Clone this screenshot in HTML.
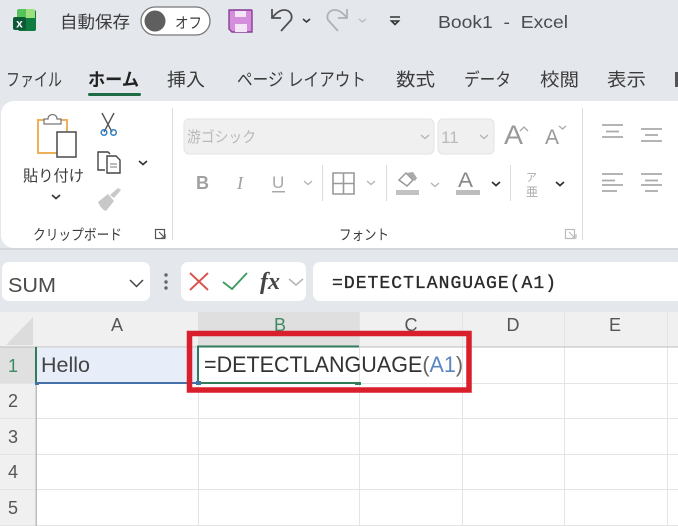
<!DOCTYPE html>
<html><head><meta charset="utf-8"><style>
html,body{margin:0;padding:0;background:#e4e7ec;width:678px;height:526px;overflow:hidden}
svg{display:block}
text{font-family:"Liberation Sans","Noto Sans CJK JP",sans-serif;fill:#3c3c3c}
</style></head><body>
<svg width="678" height="526" viewBox="0 0 678 526" xmlns="http://www.w3.org/2000/svg">
<rect width="678" height="526" fill="#e4e7ec"/>
<!-- excel icon -->
<path d="M18 10h16a2 2 0 0 1 2 2v17a2 2 0 0 1-2 2H20a2 2 0 0 1-2-2z" fill="#117a3d"/>
<path d="M17 11a2 2 0 0 1 2-2h7v9h-9z" fill="#55c25a"/><path d="M26 9h7a2 2 0 0 1 2 2v7H26z" fill="#9be07c"/>
<path d="M26 18h9v13H26z" fill="#107c41"/>
<rect x="13" y="17" width="13" height="13" rx="2" fill="#0c5a35"/>
<text x="19.500" y="27.500" font-size="12" font-weight="bold" text-anchor="middle" style="fill:#fff">x</text>
<!-- title bar -->
<text x="60" y="28" font-size="17" textLength="70" lengthAdjust="spacingAndGlyphs">自動保存</text>
<rect x="141" y="7" width="69" height="28" rx="14" fill="#fff" stroke="#777" stroke-width="1.300"/>
<circle cx="155" cy="21" r="10.500" fill="#5f5f5f"/>
<text x="175" y="28" font-size="15" textLength="27" lengthAdjust="spacingAndGlyphs">オフ</text>
<path d="M229 10h22a1 1 0 0 1 1 1v21h-20l-3-3z" fill="#d58edb" stroke="#8a3c98" stroke-width="1.400"/>
<rect x="235" y="11" width="11" height="6" fill="#f4e4f6"/>
<rect x="235" y="24" width="12" height="8" fill="#f4e4f6"/>
<path d="M272 9v9h9M272 18c4-5 8-8 12-8 6 0 9 5 7 10l-10 11" fill="none" stroke="#505050" stroke-width="1.800"/>
<path d="M303 19l3.500 3 3.500-3" fill="none" stroke="#333" stroke-width="1.500"/>
<path d="M347 9v9h-9M347 18c-4-5-8-8-12-8-6 0-9 5-7 10l10 11" fill="none" stroke="#aeb2b6" stroke-width="1.800"/>
<path d="M359 19l3.500 3 3.500-3" fill="none" stroke="#b8bbbf" stroke-width="1.300"/>
<path d="M390 17h10M391.500 21l3.500 3.500 3.500-3.500z" fill="none" stroke="#333" stroke-width="1.600"/>
<text x="438" y="28" font-size="17.500" textLength="130" lengthAdjust="spacingAndGlyphs" xml:space="preserve" style="fill:#4a4d50">Book1  -  Excel</text>
<!-- tabs -->
<g font-size="18">
<text x="6" y="86" textLength="56" lengthAdjust="spacingAndGlyphs">ファイル</text>
<text x="88" y="86" textLength="51" lengthAdjust="spacingAndGlyphs" font-weight="bold" style="fill:#222">ホーム</text>
<text x="167" y="86" textLength="38" lengthAdjust="spacingAndGlyphs">挿入</text>
<text x="237" y="86" textLength="129" lengthAdjust="spacingAndGlyphs">ページ レイアウト</text>
<text x="396" y="86" textLength="39" lengthAdjust="spacingAndGlyphs">数式</text>
<text x="464" y="86" textLength="47" lengthAdjust="spacingAndGlyphs">データ</text>
<text x="540" y="86" textLength="39" lengthAdjust="spacingAndGlyphs">校閲</text>
<text x="607" y="86" textLength="39" lengthAdjust="spacingAndGlyphs">表示</text>
<rect x="675" y="72" width="3" height="15" fill="#555"/>
</g>
<rect x="88" y="93" width="53" height="3" rx="1.500" fill="#1e6b45"/>
<!-- ribbon -->
<path d="M14 101H678V248H14a13 13 0 0 1-13-13V114a13 13 0 0 1 13-13z" fill="#fff"/>
<rect x="0" y="248" width="678" height="2" fill="#d4d6d9"/>
<rect x="172" y="108" width="1" height="132" fill="#dcdcdc"/>
<rect x="582" y="108" width="1" height="132" fill="#dcdcdc"/>
<!-- clipboard -->
<path d="M44 120H38V153H67V120H61" fill="#fff" stroke="#eeb05a" stroke-width="2"/>
<path d="M44 124V119h4c0-6 9-6 9 0h4v5z" fill="#fff" stroke="#777" stroke-width="1.200"/>
<rect x="57" y="132" width="19" height="25" fill="#fff" stroke="#555" stroke-width="1.600"/>
<text x="23" y="181" font-size="15.500" textLength="61" lengthAdjust="spacingAndGlyphs">貼り付け</text>
<path d="M52 195l4 3.500 4-3.500" fill="none" stroke="#333" stroke-width="1.600"/>
<path d="M102 113l10 19M114 113l-10 19" stroke="#555" stroke-width="1.400" fill="none"/>
<circle cx="104" cy="132.500" r="2.800" fill="none" stroke="#2f7fc4" stroke-width="1.500"/>
<circle cx="113.500" cy="132.500" r="2.800" fill="none" stroke="#2f7fc4" stroke-width="1.500"/>
<path d="M105 170h-7v-18h10l2 2" fill="none" stroke="#444" stroke-width="1.400"/>
<path d="M107 156h9l4 4v13h-13z" fill="#fff" stroke="#444" stroke-width="1.400"/>
<path d="M110 164h7M110 167h7" stroke="#777" stroke-width="1"/>
<path d="M139 161l4 3.500 4-3.500" fill="none" stroke="#333" stroke-width="1.600"/>
<path d="M98 202l10-8 6 7-8 10c-3-1-6-4-8-9z" fill="#c8c8c8"/><path d="M110 195l8-7 3 2-7 8z" fill="#c8c8c8"/>
<text x="33" y="240" font-size="14.500" textLength="89" lengthAdjust="spacingAndGlyphs">クリップボード</text>
<rect x="155.500" y="229.500" width="9" height="9" fill="none" stroke="#555" stroke-width="1.200"/>
<path d="M159 232l6 6M165 234v4h-4" fill="none" stroke="#555" stroke-width="1.200"/>
<!-- font -->
<rect x="184" y="119" width="250" height="35" rx="5" fill="#f0f0f0" stroke="#e3e3e3"/>
<text x="187" y="142" font-size="15" textLength="69" lengthAdjust="spacingAndGlyphs" style="fill:#b9b9b9">游ゴシック</text>
<path d="M421 135l4 3.500 4-3.500" fill="none" stroke="#b5b5b5" stroke-width="1.400"/>
<rect x="438" y="119" width="56" height="35" rx="5" fill="#f0f0f0" stroke="#e3e3e3"/>
<text x="441" y="143" font-size="17" style="fill:#b9b9b9">11</text>
<path d="M480 135l4 3.500 4-3.500" fill="none" stroke="#b5b5b5" stroke-width="1.400"/>
<text x="504" y="144" font-size="27" textLength="19" lengthAdjust="spacingAndGlyphs" style="fill:#999">A</text>
<path d="M520 131l4-4 4 4" fill="none" stroke="#aaa" stroke-width="1.300"/>
<text x="545" y="144" font-size="21" textLength="14" lengthAdjust="spacingAndGlyphs" style="fill:#999">A</text>
<path d="M559 126l3.500 3 3.500-3" fill="none" stroke="#aaa" stroke-width="1.300"/>
<text x="196" y="189" font-size="18" font-weight="bold" style="fill:#a0a0a0">B</text>
<text x="237" y="189" font-size="18" font-style="italic" style="fill:#a0a0a0;font-family:'Liberation Serif'">I</text>
<text x="272" y="188" font-size="17" style="fill:#a8a8a8">U</text>
<rect x="272" y="191" width="13" height="1.500" fill="#a8a8a8"/>
<path d="M304 181l4 3.500 4-3.500" fill="none" stroke="#b5b5b5" stroke-width="1.400"/>
<rect x="322" y="165" width="1" height="36" fill="#dcdcdc"/>
<path d="M333 173h21v21h-21zM343.500 173v21M333 183.500h21" fill="none" stroke="#999" stroke-width="1.600"/>
<path d="M367 181l4 3.500 4-3.500" fill="none" stroke="#b5b5b5" stroke-width="1.400"/>
<rect x="386" y="165" width="1" height="36" fill="#dcdcdc"/>
<path d="M399 180l7-7 7 7-6 6z" fill="none" stroke="#999" stroke-width="1.500"/><path d="M406 173l7-1 4 6-2 3z" fill="#aaa"/>
<rect x="396" y="190" width="23" height="5" fill="#c2c2c2"/>
<path d="M431 183l4 3.500 4-3.500" fill="none" stroke="#b5b5b5" stroke-width="1.400"/>
<text x="458" y="187" font-size="21" textLength="15" lengthAdjust="spacingAndGlyphs" style="fill:#888">A</text>
<rect x="456" y="190" width="24" height="5" fill="#bdbdbd"/>
<path d="M492 182l4 3.500 4-3.500" fill="none" stroke="#333" stroke-width="1.800"/>
<rect x="510" y="165" width="1" height="36" fill="#dcdcdc"/>
<text x="526" y="181" font-size="11" style="fill:#aaa">ア</text>
<text x="526" y="196" font-size="12" style="fill:#aaa">亜</text>
<path d="M556 182l4 3.500 4-3.500" fill="none" stroke="#333" stroke-width="1.800"/>
<text x="339" y="240" font-size="14.500" textLength="50" lengthAdjust="spacingAndGlyphs">フォント</text>
<rect x="565.500" y="229.500" width="9" height="9" fill="none" stroke="#bbb" stroke-width="1.200"/>
<path d="M569 232l6 6M576 234v4h-4" fill="none" stroke="#bbb" stroke-width="1.200"/>
<!-- align -->
<g stroke="#aaa" stroke-width="1.700" fill="none">
<path d="M602 125h21M606 131.500h13M602 137h21"/>
<path d="M641 129h21M645 135h13M641 141h21"/>
<path d="M602 174h21M602 180.500h13M602 185h21M602 191h15"/>
<path d="M641 174h21M645 180.500h13M641 185h21M645 191h13"/>
</g>
<!-- formula bar -->
<rect x="2" y="262" width="148" height="39" rx="7" fill="#fff"/>
<text x="8" y="292" font-size="20" textLength="48" lengthAdjust="spacingAndGlyphs" style="fill:#4b4b4b">SUM</text>
<path d="M130 280l6.500 6.500 6.500-6.500" fill="none" stroke="#444" stroke-width="1.500"/>
<circle cx="166" cy="275" r="1.700" fill="#666"/><circle cx="166" cy="282" r="1.700" fill="#666"/><circle cx="166" cy="288" r="1.700" fill="#666"/>
<rect x="181" y="262" width="125" height="39" rx="7" fill="#fff"/>
<path d="M190 273l18 17M208 273l-18 17" stroke="#d9544f" stroke-width="1.900" fill="none"/>
<path d="M223 282l9 7 15-16" stroke="#3b9a5e" stroke-width="1.800" fill="none"/>
<text x="260" y="289" font-size="24" font-weight="bold" font-style="italic" style="fill:#444;font-family:'Liberation Serif'">fx</text>
<path d="M289 279l7 6 7-6" fill="none" stroke="#b3b3b3" stroke-width="1.500"/>
<rect x="313" y="262" width="370" height="39" rx="7" fill="#fff"/>
<text x="332" y="288" font-size="18" textLength="224" stroke="#2a2a2a" stroke-width="0.350" style="fill:#2a2a2a;font-family:'Liberation Mono','Liberation Sans'">=DETECTLANGUAGE(A1)</text>
<!-- grid -->
<rect x="0" y="312" width="678" height="35" fill="#f0f0f0"/>
<rect x="0" y="347" width="36" height="179" fill="#f0f0f0"/>
<rect x="198" y="312" width="161" height="35" fill="#dfdfdf"/>
<rect x="0" y="347" width="36" height="36" fill="#e0e0e0"/>
<path d="M33 317v28H6z" fill="#dcdcdc"/>
<rect x="37" y="347" width="641" height="179" fill="#fff"/>
<g stroke="#e4e4e4" stroke-width="1">
<path d="M198.500 347V526M359.500 347V526M462.500 347V526M564.500 347V526M667.500 347V526"/>
<path d="M37 418.500H678M37 454.500H678M37 489.500H678M37 525.500H678M37 383.500H678"/>
<path d="M0 418.500H36M0 454.500H36M0 489.500H36M0 525.500H36M0 383.500H36"/>
<path d="M359.500 312V347M462.500 312V347M564.500 312V347M667.500 312V347"/>
</g>
<rect x="0" y="346.500" width="678" height="1" fill="#bdbdbd"/>
<rect x="35.500" y="347" width="1.500" height="179" fill="#bdbdbd"/>
<g font-size="18" text-anchor="middle">
<text x="117" y="331" style="fill:#555">A</text>
<text x="280" y="331" style="fill:#3d8a63">B</text>
<text x="411" y="331" style="fill:#555">C</text>
<text x="513" y="331" style="fill:#555">D</text>
<text x="615" y="331" style="fill:#555">E</text>
<text x="13" y="372" style="fill:#3d8a63">1</text>
<text x="13" y="407" style="fill:#555">2</text>
<text x="13" y="443" style="fill:#555">3</text>
<text x="13" y="478" style="fill:#555">4</text>
<text x="13" y="514" style="fill:#555">5</text>
</g>
<!-- cells -->
<rect x="37" y="348" width="161" height="34" fill="#e8eef9"/>
<rect x="35" y="347" width="2" height="36" fill="#2f7d58"/>
<rect x="37" y="382" width="161" height="2" fill="#4472a8"/>
<rect x="35" y="382" width="4" height="3" fill="#4472a8"/>
<text x="41" y="372" font-size="21" textLength="49" lengthAdjust="spacingAndGlyphs" style="fill:#444">Hello</text>
<rect x="197" y="345.500" width="162" height="2" fill="#2f7d58"/>
<rect x="197" y="347" width="2" height="35" fill="#2f7d58"/>
<rect x="198" y="382" width="157" height="2" fill="#2f7d58"/>
<rect x="355" y="382" width="6" height="3" fill="#2f7d58"/>
<rect x="196" y="381" width="5" height="4" fill="#4472a8"/>
<text x="204" y="372" font-size="22" textLength="259" lengthAdjust="spacingAndGlyphs"><tspan style="fill:#333">=DETECTLANGUAGE</tspan><tspan style="fill:#666">(</tspan><tspan style="fill:#5a86c0">A1</tspan><tspan style="fill:#666">)</tspan></text>
<rect x="189.500" y="333.500" width="279.500" height="56.500" fill="none" stroke="#da1f2c" stroke-width="5.500"/>
</svg>
</body></html>
